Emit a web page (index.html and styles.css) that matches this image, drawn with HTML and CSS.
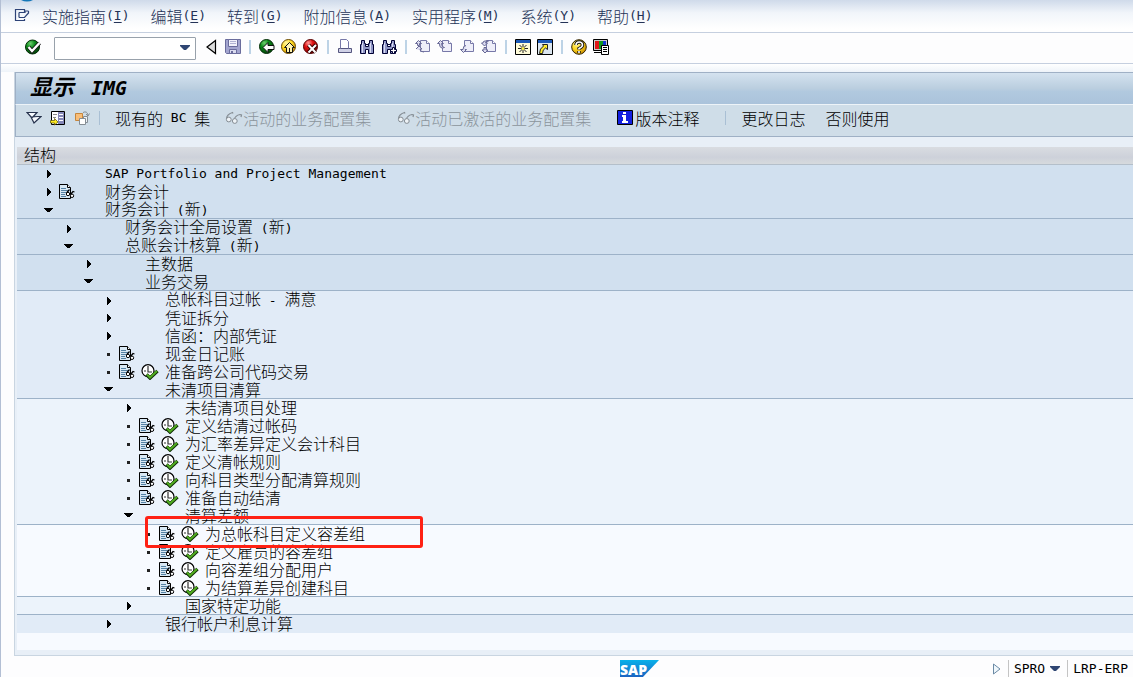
FILE: index.html
```html
<!DOCTYPE html>
<html lang="zh-CN">
<head>
<meta charset="utf-8">
<meta name="viewport" content="width=device-width, initial-scale=1">
<title>显示 IMG</title>
<link rel="stylesheet" href="styles.css">
</head>
<body>
<svg class="sprite" aria-hidden="true">
  <defs>
    <radialGradient id="g-green" cx=".35" cy=".25" r=".8"><stop offset="0" stop-color="#6fd06f"/><stop offset=".4" stop-color="#0c8a1a"/><stop offset="1" stop-color="#033f08"/></radialGradient>
    <radialGradient id="g-yellow" cx=".35" cy=".25" r=".8"><stop offset="0" stop-color="#fff7a0"/><stop offset=".5" stop-color="#ffd820"/><stop offset="1" stop-color="#c88a00"/></radialGradient>
    <radialGradient id="g-red" cx=".35" cy=".25" r=".8"><stop offset="0" stop-color="#ff9a9a"/><stop offset=".4" stop-color="#e01010"/><stop offset="1" stop-color="#800000"/></radialGradient>
    <linearGradient id="g-sap" x1="0" y1="0" x2="0" y2="1"><stop offset="0" stop-color="#08b1ea"/><stop offset="1" stop-color="#1c5fbf"/></linearGradient>
  </defs>
  <symbol id="closed" viewBox="0 0 16 16"><path d="M7 4h1v1h1v1h1v1h1v2h-1v1H9v1H8v1H7z" fill="#000"/></symbol>
  <symbol id="open" viewBox="0 0 16 16"><path d="M4 5h9v1h-1v1h-1v1h-1v1H7V8H6V7H5V6H4z" fill="#000"/></symbol>
  <symbol id="leaf" viewBox="0 0 16 16"><path d="M7 7h3v3H7z" fill="#222"/></symbol>
  <symbol id="doc" viewBox="0 0 18 16">
    <path d="M1.500.500h8l3 3v11h-11z" fill="#d8e8f4" stroke="#000"/>
    <path d="M9.500.500v3h3" fill="#fff" stroke="#000"/>
    <path d="M3 4.500h5M3 6.500h8M3 8.500h5M3 10.500h4M3 12.500h5" stroke="#5582a4"/>
    <path d="M8.500 9l3-3.500M12.500 10.500l2.500-3 1.500.5" fill="none" stroke="#000" stroke-width="1.200"/>
    <circle cx="10" cy="10" r="1.700" fill="#fff" stroke="#000"/><circle cx="14" cy="11.800" r="1.700" fill="#fff" stroke="#000"/>
  </symbol>
  <symbol id="exec" viewBox="0 0 18 16">
    <circle cx="7" cy="6.700" r="6" fill="#fff" stroke="#000" stroke-width="1.200"/>
    <path d="M7 2v6h4M3 7h2M7 10.500v1" fill="none" stroke="#333" stroke-width="1.200"/>
    <path d="M5.500 10.500l3.500 3.500 7.500-7" fill="none" stroke="#102e08" stroke-width="3.400"/>
    <path d="M6 10.500l3 3 7-6.500" fill="none" stroke="#51ad20" stroke-width="2"/>
  </symbol>
  <symbol id="glasses" viewBox="0 0 18 16">
    <path d="M1.500 9c0-3 3-5.500 6-6.500l.5 1M9 10c1-4 3-5 6-5.500l1.500.5-.5 2" fill="none" stroke="#858d94" stroke-width="1.200"/>
    <circle cx="3.800" cy="9.500" r="2.400" fill="#eef3f7" stroke="#858d94"/><circle cx="9.800" cy="11" r="2.400" fill="#eef3f7" stroke="#858d94"/>
  </symbol>
  <symbol id="binoculars" viewBox="0 0 16 16">
    <path d="M2.500 1.500h3v3h1v3h3v-3h1v-3h3v4h1v9h-5v-4h-3v4h-5v-9h1z" fill="#8f95c5" stroke="#000033"/>
    <path d="M3.500 4v10M11.500 4v10" stroke="#dadcf2"/><path d="M7 5.500h2" stroke="#000033"/>
  </symbol>
  <symbol id="page" viewBox="0 0 16 16">
    <path d="M5.500 1.500h6l3 3v8h-9z" fill="#eeeef9" stroke="#7778a8"/><path d="M11.500 1.500v3h3" fill="#fff" stroke="#7778a8"/>
  </symbol>
</svg>

<div class="window">
  <header class="menubar">
    <svg class="orb" viewBox="0 0 12 2" aria-hidden="true"><path d="M0 0h12Q6 3 0 0" fill="#1377b8"/></svg>
    <button class="sysmenu" aria-label="系统菜单"><svg width="16" height="14" viewBox="0 0 16 14"><path d="M10.500 3V.500h-9v11h9V10M5 3.500h6v-1.500l3.500 0M5 8.500h5.500l4-4.500M5 3.500v5M14.500 2v2.500" fill="none" stroke="#2d4377" stroke-width="1.200"/></svg></button>
    <nav class="menus" aria-label="菜单">
      <button>实施指南<span class="lat">(<u>I</u>)</span></button>
      <button>编辑<span class="lat">(<u>E</u>)</span></button>
      <button>转到<span class="lat">(<u>G</u>)</span></button>
      <button>附加信息<span class="lat">(<u>A</u>)</span></button>
      <button>实用程序<span class="lat">(<u>M</u>)</span></button>
      <button>系统<span class="lat">(<u>Y</u>)</span></button>
      <button>帮助<span class="lat">(<u>H</u>)</span></button>
    </nav>
  </header>

  <div class="toolbar" role="toolbar" aria-label="标准工具栏">
    <button aria-label="回车"><svg class="i16" viewBox="0 0 16 16"><circle cx="7.500" cy="8" r="7" fill="url(#g-green)" stroke="#032b06"/><path d="M3.500 8l3.500 4 7.500-8" fill="none" stroke="#111" stroke-width="4"/><path d="M3.500 8l3.500 4 7.500-8" fill="none" stroke="#fff" stroke-width="2.400"/></svg></button>
    <div class="command">
      <input type="text" aria-label="命令字段">
      <button aria-label="命令历史"><svg width="10" height="6" viewBox="0 0 10 6"><path d="M0 0h10v1L6 5H4L0 1z" fill="#2f4673"/></svg></button>
    </div>
    <button aria-label="收起命令字段"><svg class="i16" viewBox="0 0 16 16"><path d="M12.500 1.500v13L4 8z" fill="#dedede" stroke="#000" stroke-width="1.200"/></svg></button>
    <button aria-label="保存"><svg class="i16" viewBox="0 0 16 16"><path d="M.5.500h15v14h-14l-1-1z" fill="#a3a5cf" stroke="#6a6c9c"/><path d="M3.500.500h9v7h-9z" fill="#f2f2fb" stroke="#6a6c9c"/><path d="M5 2.500h6M5 4.500h6" stroke="#b1b3d3"/><path d="M4.500 10.500h7v4h-7z" fill="#dadbef" stroke="#6a6c9c"/><path d="M6 12h2v2H6z" fill="#6a6c9c"/></svg></button>
    <span class="sep"></span>
    <button aria-label="返回"><svg class="i16" viewBox="0 0 16 16"><circle cx="7.500" cy="7.500" r="7" fill="url(#g-green)" stroke="#032b06"/><path d="M4 8.500l5-5v3h6v4H9v3z" fill="#fff" stroke="#111"/></svg></button>
    <button aria-label="退出"><svg class="i16" viewBox="0 0 16 16"><circle cx="7.500" cy="7.500" r="7" fill="url(#g-yellow)" stroke="#684800"/><path d="M8.500 3.500l5 5h-2v5h-6v-5h-2z" fill="#fff4b0" stroke="#111"/><path d="M8.500 9v4" stroke="#111"/></svg></button>
    <button aria-label="取消"><svg class="i16" viewBox="0 0 16 16"><circle cx="7.500" cy="7.500" r="7" fill="url(#g-red)" stroke="#500"/><path d="M5.500 6l7 7.500M13 6l-7.500 7.500" stroke="#300" stroke-width="4"/><path d="M5.500 6l7 7.500M13 6l-7.500 7.500" stroke="#fff" stroke-width="2"/></svg></button>
    <span class="sep"></span>
    <button aria-label="打印"><svg class="i16" viewBox="0 0 16 16"><path d="M3.500.500h6l2 2v7h-8z" fill="#fff" stroke="#7778a8"/><path d="M3.500 9.500h-2v4h13v-4h-3z" fill="#d0d1e6" stroke="#55567f"/></svg></button>
    <button aria-label="查找"><svg class="i16"><use href="#binoculars"/></svg></button>
    <button aria-label="继续查找"><svg class="i16" viewBox="0 0 16 16"><use href="#binoculars"/><path d="M11.500 8.500h2v2h2v2h-2v2h-2v-2h-2v-2h2z" fill="#fff" stroke="#000033"/></svg></button>
    <span class="sep"></span>
    <button aria-label="首页"><svg class="i16" viewBox="0 0 16 16"><use href="#page"/><path d="M.5 4.500l3-3 3 3-2 0v2h-2v-2zM1 10l3-3 3 3-2 0q0 3 4 3" fill="#dcdcf0" stroke="#666795"/></svg></button>
    <button aria-label="上一页"><svg class="i16" viewBox="0 0 16 16"><use href="#page"/><path d="M.5 4.500l3-3 3 3-2 0q0 4 3 4-5 2-5-4z" fill="#dcdcf0" stroke="#666795"/></svg></button>
    <button aria-label="下一页"><svg class="i16" viewBox="0 0 16 16"><use href="#page"/><path d="M7 6.500q-3 0-3 4H1.500l3 3 3-3H6" fill="#dcdcf0" stroke="#666795"/></svg></button>
    <button aria-label="末页"><svg class="i16" viewBox="0 0 16 16"><use href="#page"/><path d="M.5 4l3 3 3-3h-2q0-2 3-2H4q-2 0-2 2zM1 11l3 3 3-3H5V8.500H3V11z" fill="#dcdcf0" stroke="#666795"/></svg></button>
    <span class="sep"></span>
    <button aria-label="创建新会话"><svg class="i16" viewBox="0 0 16 16"><path d="M.5.500h15v15H.5z" fill="#fffbd8" stroke="#000"/><path d="M1 1h14v3H1z" fill="#1b58b8"/><path d="M8 5v9M3 9.500h10M4.500 6l7 7M11.500 6l-7 7" stroke="#222"/><circle cx="8" cy="9.500" r="1.500" fill="#fff24a"/></svg></button>
    <button aria-label="生成快捷方式"><svg class="i16" viewBox="0 0 16 16"><path d="M.5.500h15v15H.5z" fill="#dce6f0" stroke="#000"/><path d="M1 1h14v3H1z" fill="#1b58b8"/><path d="M5.500 5.500h5v5l-2-1.500q-3 1.500-3 5.500h-3q0-5 4-7.500z" fill="#ffec30" stroke="#222"/></svg></button>
    <span class="sep"></span>
    <button aria-label="帮助"><svg class="i16" viewBox="0 0 16 16"><circle cx="8" cy="8" r="7.300" fill="url(#g-yellow)" stroke="#332400"/><path d="M5 6q0-3 3.200-3T11.500 6Q11.500 8 8 9.500v1M8 12v2" fill="none" stroke="#111" stroke-width="3.400"/><path d="M5 6q0-3 3.200-3T11.500 6Q11.500 8 8 9.500v1M8 12v2" fill="none" stroke="#fff" stroke-width="1.600"/></svg></button>
    <button aria-label="定制本地布局"><svg class="i16" viewBox="0 0 16 16"><path d="M.5.500h14v11H.5z" fill="#ccc" stroke="#000"/><path d="M2 2h4v8H2z" fill="#e01818"/><path d="M6 2h4v8H6z" fill="#109a20"/><path d="M10 2h3v8h-3z" fill="#1538d0"/><path d="M1 13.500h7" stroke="#000"/><path d="M8.500 6.500h7v9h-7z" fill="#fff" stroke="#000"/><path d="M10 8.500h4M10 10.500h4M10 12.500h4" stroke="#000"/></svg></button>
  </div>

  <main class="workspace">
    <div class="panel">
      <h1 class="title">显示 <span>IMG</span></h1>
      <div class="appbar" role="toolbar" aria-label="应用工具栏">
        <div class="tools">
          <button aria-label="展开"><svg class="i16" viewBox="0 0 16 16"><path d="M1 2.500h10L6 8zM5 7l3 6 7-6.500h-3z" fill="#f8fbff" stroke="#26324d" stroke-width="1.200"/></svg></button>
          <button aria-label="定位"><svg class="i16" viewBox="0 0 16 16"><path d="M1.500 1.500h13v13h-13z" fill="#fff" stroke="#000"/><path d="M8 2h6v12H8z" fill="#8588b8"/><path d="M9 4.500h4M9 7.500h4M9 10.500h4" stroke="#fff"/><path d="M3 4.500h4M3 7.500h3" stroke="#888"/><path d="M.5 10.500h4v-2l3.500 3.500L4.500 15v-2h-4z" fill="#ffec20" stroke="#554a00" stroke-width=".7"/></svg></button>
          <button aria-label="比较"><svg class="i16" viewBox="0 0 16 16"><path d="M1.500 3.500h7v7h-7z" fill="#f8bd78" stroke="#c6863c"/><path d="M9 2.500q4-2 5 2.500M12 4l2 2 1.500-2.500" fill="none" stroke="#858d94"/><path d="M9.500 6.500h4v6h-4z" fill="#eef3f7" stroke="#858d94"/><path d="M5.500 8.500h6v6h-6z" fill="#fff" stroke="#858d94"/></svg></button>
        </div>
        <span class="rule"></span>
        <button class="cmd first">现有的<span class="lat"> BC </span>集</button>
        <button class="cmd off" disabled><svg class="i18"><use href="#glasses"/></svg>活动的业务配置集</button>
        <button class="cmd off" disabled><svg class="i18"><use href="#glasses"/></svg>活动已激活的业务配置集</button>
        <button class="cmd"><svg class="i18" viewBox="0 0 18 16"><path d="M.5.500h15v14H.5z" fill="#1420e0" stroke="#000"/><path d="M6 2h3v2H6zM5 5h4v6h2v2H5v-2h1V7H5z" fill="#fff"/></svg>版本注释</button>
        <span class="rule"></span>
        <button class="cmd last">更改日志</button>
        <button class="cmd last">否则使用</button>
      </div>

      <section class="tree-box">
        <h2 class="tree-head">结构</h2>
        <ul class="tree" role="tree">
          <li class="row l0"><button aria-label="展开"><svg><use href="#closed"/></svg></button><span class="label lat">SAP Portfolio and Project Management</span></li>
          <li class="row l0"><button aria-label="展开"><svg><use href="#closed"/></svg></button><svg class="doc"><use href="#doc"/></svg><span class="label">财务会计</span></li>
          <li class="row l0 end"><button aria-label="折叠"><svg><use href="#open"/></svg></button><span class="label">财务会计<span class="lat"> (</span>新<span class="lat">)</span></span></li>
          <li class="row l1"><button aria-label="展开"><svg><use href="#closed"/></svg></button><span class="label">财务会计全局设置<span class="lat"> (</span>新<span class="lat">)</span></span></li>
          <li class="row l1 end"><button aria-label="折叠"><svg><use href="#open"/></svg></button><span class="label">总账会计核算<span class="lat"> (</span>新<span class="lat">)</span></span></li>
          <li class="row l2"><button aria-label="展开"><svg><use href="#closed"/></svg></button><span class="label">主数据</span></li>
          <li class="row l2 end"><button aria-label="折叠"><svg><use href="#open"/></svg></button><span class="label">业务交易</span></li>
          <li class="row l3"><button aria-label="展开"><svg><use href="#closed"/></svg></button><span class="label">总帐科目过帐<span class="lat"> - </span>满意</span></li>
          <li class="row l3"><button aria-label="展开"><svg><use href="#closed"/></svg></button><span class="label">凭证拆分</span></li>
          <li class="row l3"><button aria-label="展开"><svg><use href="#closed"/></svg></button><span class="label">信函：内部凭证</span></li>
          <li class="row l3"><svg class="dot"><use href="#leaf"/></svg><svg class="doc"><use href="#doc"/></svg><span class="label">现金日记账</span></li>
          <li class="row l3"><svg class="dot"><use href="#leaf"/></svg><svg class="doc"><use href="#doc"/></svg><svg class="exec"><use href="#exec"/></svg><span class="label">准备跨公司代码交易</span></li>
          <li class="row l3 end"><button aria-label="折叠"><svg><use href="#open"/></svg></button><span class="label">未清项目清算</span></li>
          <li class="row l4"><button aria-label="展开"><svg><use href="#closed"/></svg></button><span class="label">未结清项目处理</span></li>
          <li class="row l4"><svg class="dot"><use href="#leaf"/></svg><svg class="doc"><use href="#doc"/></svg><svg class="exec"><use href="#exec"/></svg><span class="label">定义结清过帐码</span></li>
          <li class="row l4"><svg class="dot"><use href="#leaf"/></svg><svg class="doc"><use href="#doc"/></svg><svg class="exec"><use href="#exec"/></svg><span class="label">为汇率差异定义会计科目</span></li>
          <li class="row l4"><svg class="dot"><use href="#leaf"/></svg><svg class="doc"><use href="#doc"/></svg><svg class="exec"><use href="#exec"/></svg><span class="label">定义清帐规则</span></li>
          <li class="row l4"><svg class="dot"><use href="#leaf"/></svg><svg class="doc"><use href="#doc"/></svg><svg class="exec"><use href="#exec"/></svg><span class="label">向科目类型分配清算规则</span></li>
          <li class="row l4"><svg class="dot"><use href="#leaf"/></svg><svg class="doc"><use href="#doc"/></svg><svg class="exec"><use href="#exec"/></svg><span class="label">准备自动结清</span></li>
          <li class="row l4 end"><button aria-label="折叠"><svg><use href="#open"/></svg></button><span class="label">清算差额</span></li>
          <li class="row l5"><svg class="dot"><use href="#leaf"/></svg><svg class="doc"><use href="#doc"/></svg><svg class="exec"><use href="#exec"/></svg><span class="label">为总帐科目定义容差组</span><span class="callout"></span></li>
          <li class="row l5"><svg class="dot"><use href="#leaf"/></svg><svg class="doc"><use href="#doc"/></svg><svg class="exec"><use href="#exec"/></svg><span class="label">定义雇员的容差组</span></li>
          <li class="row l5"><svg class="dot"><use href="#leaf"/></svg><svg class="doc"><use href="#doc"/></svg><svg class="exec"><use href="#exec"/></svg><span class="label">向容差组分配用户</span></li>
          <li class="row l5 end"><svg class="dot"><use href="#leaf"/></svg><svg class="doc"><use href="#doc"/></svg><svg class="exec"><use href="#exec"/></svg><span class="label">为结算差异创建科目</span></li>
          <li class="row l4 end"><button aria-label="展开"><svg><use href="#closed"/></svg></button><span class="label">国家特定功能</span></li>
          <li class="row l3"><button aria-label="展开"><svg><use href="#closed"/></svg></button><span class="label">银行帐户利息计算</span></li>
        </ul>
      </section>
    </div>
  </main>

  <footer class="status">
    <svg class="sap" width="39" height="18" viewBox="0 0 39 18" role="img" aria-label="SAP"><path d="M0 0h39L22 18H0z" fill="url(#g-sap)"/><text x="0" y="15" class="sap-text">SAP</text></svg>
    <div class="info">
      <button aria-label="显示系统信息"><svg width="10" height="12" viewBox="0 0 10 12"><path d="M1.500 1v10L8 6z" fill="#eef6fb" stroke="#6b8aa5"/></svg></button>
      <button class="tcode">SPRO<svg width="10" height="6" viewBox="0 0 10 6"><path d="M0 0h10v1L6 5H4L0 1z" fill="#2f4673"/></svg></button>
      <span class="host">LRP-ERP</span>
    </div>
  </footer>
</div>
</body>
</html>
```
FILE: styles.css
```css
* {
  box-sizing: border-box;
}

body {
  margin: 0;
  color: #000;
  background: #fdfdfe;
  font: 300 16px/18px "Noto Sans CJK SC", sans-serif;
  overflow: hidden;
}

button {
  display: flex;
  align-items: center;
  justify-content: center;
  margin: 0;
  padding: 0;
  border: 0;
  background: none;
  color: inherit;
  font: inherit;
  white-space: pre;
}

svg {
  display: block;
  flex: none;
}

.sprite {
  position: absolute;
  width: 0;
  height: 0;
}

.lat {
  font-family: "DejaVu Sans Mono", monospace;
  font-size: 13px;
  white-space: pre;
}

.i16 {
  width: 16px;
  height: 16px;
}

.i18 {
  width: 18px;
  height: 16px;
}

.window {
  display: flex;
  flex-direction: column;
  min-height: 100vh;
  border-left: 1px solid #b3bfd4;
}

/* Menu bar */
.menubar {
  position: relative;
  display: flex;
  align-items: center;
  height: 33px;
  padding-left: 13px;
  border-bottom: 1px solid #c5cfdf;
  background: linear-gradient(#cfdaea, #f1f5fa 40%, #fff 90%);
  color: #243357;
}

.orb {
  position: absolute;
  top: 0;
  left: 20px;
  width: 12px;
  height: 2px;
}

.sysmenu {
  width: 16px;
  margin-right: 12px;
}

.menus {
  display: flex;
  gap: 21px;
}

.menus u {
  text-underline-offset: 2px;
}

/* Standard toolbar */
.toolbar {
  display: flex;
  align-items: center;
  height: 31px;
  padding: 0 20px 2px 21px;
  border-bottom: 1px solid #c5cfdf;
  background: #fdfdfe;
}

.toolbar > button {
  flex: none;
  width: 22px;
  height: 22px;
}

.command {
  display: flex;
  width: 142px;
  height: 23px;
  margin: 2px 4px 0 10px;
  border: 1px solid #98a1ab;
  border-radius: 1px;
  background: #fff;
}

.command input {
  flex: 1;
  min-width: 0;
  padding: 0 4px;
  border: 0;
  outline: 0;
  background: none;
  font: inherit;
}

.command button {
  width: 20px;
}

.sep {
  flex: none;
  width: 2px;
  height: 14px;
  margin: 0 5px;
  background: #bdd3e6;
}

/* Work area */
.workspace {
  flex: 1;
  padding: 8px 0 0 13px;
  background: linear-gradient(#fff, #eef3f9 8px, transparent 8px);
}

.panel {
  border-left: 1px solid #c9d5e1;
  border-bottom: 1px solid #c9d5e1;
  background: #e8eff7;
}

.title {
  height: 32px;
  margin: 0;
  padding-left: 14px;
  border-top: 1px solid #9fb0c5;
  border-left: 1px solid #9fb0c5;
  background: linear-gradient(#d4e2ef, #bacedf 50%, #b1c9df 60%, #abc3db);
  font: italic bold 22px/24px "Noto Sans CJK SC", sans-serif;
}

.title span {
  font-family: "DejaVu Sans Mono", monospace;
  font-size: 20px;
  margin-left: 12px;
}

.appbar {
  display: flex;
  align-items: center;
  height: 33px;
  padding: 0 0 5px 8px;
  border-left: 1px solid #9fb0c5;
  border-top: 1px solid #edf3f8;
  border-bottom: 1px solid #9fb0c5;
  background: #cfdde8;
}

.tools {
  display: flex;
  gap: 8px;
  padding: 0 9px 0 2px;
}

.rule {
  width: 1px;
  height: 14px;
  background: #a9bfd4;
}

.cmd {
  margin-right: 26px;
}

.first {
  margin: 0 15px;
}

.last {
  margin: 0 5px 0 15px;
}

.off {
  color: #8b949c;
}

/* Structure tree */
.tree-box {
  margin-top: 10px;
  padding: 0 0 5px 2px;
}

.tree-head {
  height: 18px;
  margin: 0;
  padding-left: 7px;
  border-bottom: 1px solid #b4bfca;
  background: linear-gradient(#d9dce1, #cdd1da 60%, #d6dadd);
  font: inherit;
  line-height: 14px;
}

.tree {
  margin: 0;
  padding: 0 0 17px;
  background: #f7faff;
  list-style: none;
}

.row {
  position: relative;
  display: grid;
  grid-template-columns: 18px 23px 24px 1fr;
  align-items: center;
  height: 18px;
}

.row > button,
.dot {
  grid-column: 1;
  grid-row: 1;
  width: 16px;
  height: 16px;
}

.row > button svg {
  width: 16px;
  height: 16px;
}

.doc,
.exec {
  grid-row: 1;
  width: 18px;
  height: 16px;
}

.doc {
  grid-column: 2;
}

.exec {
  grid-column: 3;
}

.label {
  grid-column: 4;
  grid-row: 1;
  line-height: 14px;
  padding-bottom: 3px;
  white-space: pre;
}

.label.lat {
  padding: 0;
}

.end {
  box-shadow: inset 0 -1px #9db2c8;
}

.l0 {
  padding-left: 23px;
  background: #d1e0ef;
}

.l1 {
  padding-left: 43px;
  background: #d1e0ef;
}

.l2 {
  padding-left: 63px;
  background: #d1e0ef;
}

.l3 {
  padding-left: 83px;
  background: #e1ebf7;
}

.l4 {
  padding-left: 103px;
  background: #ecf3fb;
}

.l5 {
  padding-left: 123px;
  background: #f7faff;
}

.callout {
  position: absolute;
  z-index: 1;
  top: -9px;
  left: 128px;
  width: 278px;
  height: 32px;
  border: 3px solid #ff2114;
  border-radius: 3px;
}

/* Status bar */
.status {
  display: flex;
  align-items: center;
  justify-content: space-between;
  height: 21px;
  padding: 5px 5px 0 0;
  font: 13px/18px "DejaVu Sans Mono", monospace;
}

.sap {
  margin-left: 54.9%;
}

.sap-text {
  fill: #fff;
  font: 800 14px "Open Sans", sans-serif;
}

.info {
  display: flex;
  align-items: center;
}

.tcode {
  gap: 5px;
  margin: 0 5px 0 6px;
  padding: 0 7px 0 5px;
  border-left: 1px solid #c4c4c4;
  border-right: 1px solid #c4c4c4;
}
```
